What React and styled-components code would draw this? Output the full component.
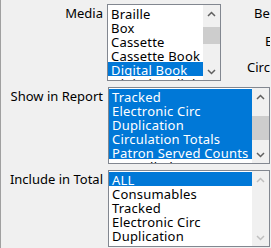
import React from 'react';
import styled, { createGlobalStyle } from 'styled-components';

const GlobalStyle = createGlobalStyle`
  html, body {
    margin: 0;
    padding: 0;
    overflow: hidden;
    background: #f0f0f0;
  }
  body {
    font-family: 'Noto Sans', 'Open Sans', sans-serif;
    font-size: 13px;
    color: #000;
  }
`;

const Window = styled.div`
  width: 270px;
  height: 248px;
  border-left: 1px solid #a0a0a0;
  padding-top: 4px;
  box-sizing: border-box;
  display: flex;
  flex-direction: column;
  gap: 6px;
  overflow: hidden;
`;

const FieldRow = styled.div`
  display: flex;
  align-items: flex-start;
`;

const Label = styled.div`
  width: 102px;
  flex-shrink: 0;
  margin-right: ${(p) => (p.$tight ? 4 : 5)}px;
  padding-top: 2px;
  line-height: 14px;
  text-align: right;
  white-space: nowrap;
`;

const ListBox = styled.div`
  width: ${(p) => p.$width}px;
  height: 77px;
  flex-shrink: 0;
  box-sizing: border-box;
  border: 1px solid #828790;
  background: #fff;
  display: flex;
`;

const Items = styled.div`
  flex: 1;
  min-width: 0;
  padding-top: 1px;
  overflow: hidden;
  letter-spacing: 0.2px;
`;

const Item = styled.div`
  height: 14px;
  box-sizing: border-box;
  padding: 1px 0 0 3px;
  line-height: 14px;
  white-space: nowrap;
  background: ${(p) => (p.$selected ? '#0078d7' : 'transparent')};
  color: ${(p) => (p.$selected ? '#fff' : '#000')};
`;

const ScrollBar = styled.div`
  width: 17px;
  flex-shrink: 0;
  background: #f0f0f0;
  display: flex;
  flex-direction: column;
`;

const ArrowButton = styled.div`
  height: 17px;
  display: flex;
  align-items: center;
  justify-content: center;
  color: ${(p) => (p.$disabled ? '#bfbfbf' : '#606060')};
`;

const Track = styled.div`
  flex: 1;
`;

const Thumb = styled.div`
  margin-top: ${(p) => p.$offset}px;
  height: ${(p) => p.$size}px;
  background: #cdcdcd;
`;

const RightCol = styled.div`
  display: flex;
  flex-direction: column;
  padding-top: 2px;
  white-space: nowrap;
`;

const SideLabel = styled.div`
  line-height: 14px;
  margin-top: ${(p) => p.$above}px;
  padding-left: ${(p) => p.$indent}px;
`;

const Chevron = ({ up }) => (
  <svg width="9" height="6" viewBox="0 0 9 6">
    <polyline
      points={up ? '1,5 4.5,1.5 8,5' : '1,1 4.5,4.5 8,1'}
      fill="none"
      stroke="currentColor"
      strokeWidth="1.5"
    />
  </svg>
);

const Scroller = ({ thumb, disabled }) => (
  <ScrollBar>
    <ArrowButton $disabled={disabled}>
      <Chevron up />
    </ArrowButton>
    <Track>{thumb && <Thumb $offset={thumb[0]} $size={thumb[1]} />}</Track>
    <ArrowButton $disabled={disabled}>
      <Chevron />
    </ArrowButton>
  </ScrollBar>
);

const List = ({ width, items, selected, thumb, disabled }) => (
  <ListBox $width={width}>
    <Items>
      {items.map((name) => (
        <Item key={name} $selected={selected.includes(name)}>
          {name}
        </Item>
      ))}
    </Items>
    <Scroller thumb={thumb} disabled={disabled} />
  </ListBox>
);

const media = ['Braille', 'Box', 'Cassette', 'Cassette Book', 'Digital Book', 'Digital Audiobook'];
const report = [
  'Tracked',
  'Electronic Circ',
  'Duplication',
  'Circulation Totals',
  'Patron Served Counts',
  'Cancelled',
];
const totals = ['ALL', 'Consumables', 'Tracked', 'Electronic Circ', 'Duplication'];

export default function App() {
  return (
    <>
      <GlobalStyle />
      <Window>
        <FieldRow>
          <Label $tight>Media</Label>
          <List width={114} items={media} selected={['Digital Book']} thumb={[5, 17]} />
          <RightCol>
            <SideLabel $above={0} $indent={33}>Begin Date</SideLabel>
            <SideLabel $above={14} $indent={44}>End Date</SideLabel>
            <SideLabel $above={12} $indent={26}>Circ Type</SideLabel>
          </RightCol>
        </FieldRow>
        <FieldRow>
          <Label>Show in Report</Label>
          <List width={162} items={report} selected={report.slice(0, 5)} thumb={[11, 24]} />
        </FieldRow>
        <FieldRow>
          <Label>Include in Total</Label>
          <List width={162} items={totals} selected={['ALL']} disabled />
        </FieldRow>
      </Window>
    </>
  );
}
